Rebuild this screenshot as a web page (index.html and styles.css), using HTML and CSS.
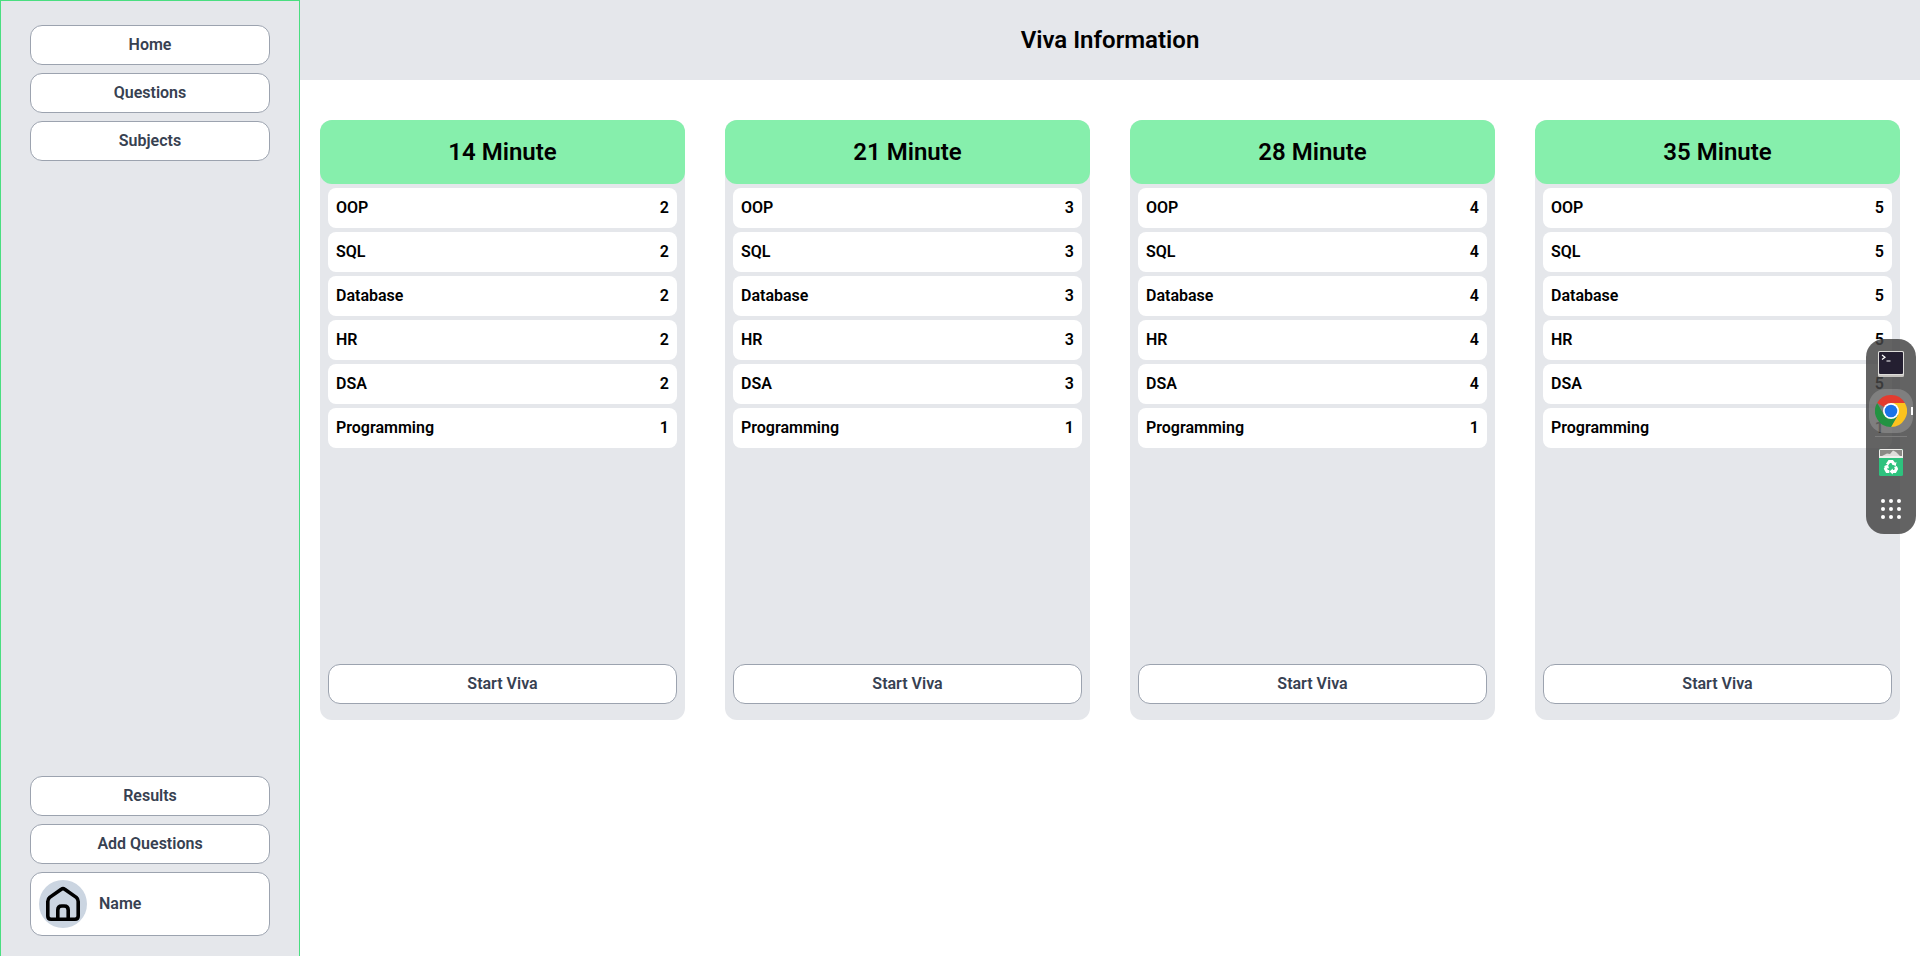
FILE: index.html
```html
<!DOCTYPE html>
<html lang="en">
<head>
<meta charset="utf-8">
<title>Viva Information</title>
<link rel="stylesheet" href="styles.css">
</head>
<body>
<div class="app">
  <nav class="sidebar">
    <div class="group">
      <button class="btn">Home</button>
      <button class="btn">Questions</button>
      <button class="btn">Subjects</button>
    </div>
    <div class="group">
      <button class="btn">Results</button>
      <button class="btn">Add Questions</button>
      <button class="btn profile">
        <span class="avatar">
          <svg viewBox="0 0 48 48" fill="none" stroke="#000" stroke-width="3.6" stroke-linejoin="round">
            <path d="M22.3 9.2 Q24 7.9 25.7 9.2 L37.3 17.4 Q39.2 19 39.2 21.5 V36 Q39.2 39.2 36 39.2 H12 Q8.8 39.2 8.8 36 V21.5 Q8.8 19 10.7 17.4 Z"/>
            <path d="M18.8 39.2 V30 Q18.8 26 22.8 26 H25.2 Q29.2 26 29.2 30 V39.2"/>
          </svg>
        </span>
        <span>Name</span>
      </button>
    </div>
  </nav>
  <main class="main">
    <header class="topbar"><h1 class="title">Viva Information</h1></header>
    <div class="cards">
      <section class="card">
        <h2 class="card-title">14 Minute</h2>
        <ul class="rows">
          <li class="row"><span>OOP</span><span>2</span></li>
          <li class="row"><span>SQL</span><span>2</span></li>
          <li class="row"><span>Database</span><span>2</span></li>
          <li class="row"><span>HR</span><span>2</span></li>
          <li class="row"><span>DSA</span><span>2</span></li>
          <li class="row"><span>Programming</span><span>1</span></li>
        </ul>
        <button class="btn start">Start Viva</button>
      </section>
      <section class="card">
        <h2 class="card-title">21 Minute</h2>
        <ul class="rows">
          <li class="row"><span>OOP</span><span>3</span></li>
          <li class="row"><span>SQL</span><span>3</span></li>
          <li class="row"><span>Database</span><span>3</span></li>
          <li class="row"><span>HR</span><span>3</span></li>
          <li class="row"><span>DSA</span><span>3</span></li>
          <li class="row"><span>Programming</span><span>1</span></li>
        </ul>
        <button class="btn start">Start Viva</button>
      </section>
      <section class="card">
        <h2 class="card-title">28 Minute</h2>
        <ul class="rows">
          <li class="row"><span>OOP</span><span>4</span></li>
          <li class="row"><span>SQL</span><span>4</span></li>
          <li class="row"><span>Database</span><span>4</span></li>
          <li class="row"><span>HR</span><span>4</span></li>
          <li class="row"><span>DSA</span><span>4</span></li>
          <li class="row"><span>Programming</span><span>1</span></li>
        </ul>
        <button class="btn start">Start Viva</button>
      </section>
      <section class="card">
        <h2 class="card-title">35 Minute</h2>
        <ul class="rows">
          <li class="row"><span>OOP</span><span>5</span></li>
          <li class="row"><span>SQL</span><span>5</span></li>
          <li class="row"><span>Database</span><span>5</span></li>
          <li class="row"><span>HR</span><span>5</span></li>
          <li class="row"><span>DSA</span><span>5</span></li>
          <li class="row"><span>Programming</span><span>1</span></li>
        </ul>
        <button class="btn start">Start Viva</button>
      </section>
    </div>
  </main>
</div>
<aside class="dock">
  <button class="dock-item" aria-label="Terminal">
    <svg viewBox="0 0 32 32">
      <rect x="3" y="4" width="26" height="25" rx="1.500" fill="#c6c4bf"/>
      <rect x="3" y="3" width="26" height="24" rx="1.500" fill="#deddda"/>
      <rect x="4" y="4" width="24" height="22" rx="1" fill="#241f31"/>
      <path d="M7 7 L10 9.200 L7 11.500 M11.500 13 H15.500" fill="none" stroke="#fff" stroke-width="1.200"/>
    </svg>
  </button>
  <button class="dock-item active" aria-label="Chrome">
    <svg viewBox="0 0 32 32">
      <path d="M16 16 L2.140 8 A16 16 0 0 1 29.860 8 Z" fill="#e33b2e"/>
      <path d="M16 8 H29.860 A16 16 0 0 1 16 32 L22.900 20 Z" fill="#fcc31e"/>
      <path d="M2.140 8 A16 16 0 0 0 16 32 L22.900 20 L16 16 L9.100 20 Z" fill="#229342"/>
      <circle cx="16" cy="16" r="8" fill="#fff"/>
      <circle cx="16" cy="16" r="6.300" fill="#1a73e8"/>
    </svg>
  </button>
  <div class="divider"></div>
  <button class="dock-item" aria-label="Trash">
    <svg viewBox="0 0 32 32">
      <rect x="4" y="3" width="24" height="27" rx="1.500" fill="#2ec27e"/>
      <path d="M4 4.500 Q4 3 5.500 3 H26.500 Q28 3 28 4.500 V12 H4 Z" fill="#f0efec"/>
      <rect x="5" y="4" width="22" height="6" fill="#8b8a86"/>
      <path d="M7 10 L12 7.500 L15 8 L18 4.500 L21 6 L25 10 Z" fill="#deddda"/>
      <g fill="none" stroke="#fff" stroke-width="3">
        <path d="M12.200 18.500 L14.300 15.500 H17.200 L19 18"/>
        <path d="M20.500 20.500 L21.500 22.800 L20 25.500 H17"/>
        <path d="M14.300 25.500 H12 L10.500 22.800 L11.800 20.500"/>
      </g>
      <path d="M21.500 16 L20.800 20 L17 18.500 Z M17.800 22.500 V28.500 L14.500 25.500 Z M8.800 20.300 L13 18.500 L14 22.500 Z" fill="#fff"/>
    </svg>
  </button>
  <button class="dock-item" aria-label="Show apps">
    <svg viewBox="0 0 32 32" fill="#fff">
      <circle cx="8" cy="8" r="2"/><circle cx="16" cy="8" r="2"/><circle cx="24" cy="8" r="2"/>
      <circle cx="8" cy="16" r="2"/><circle cx="16" cy="16" r="2"/><circle cx="24" cy="16" r="2"/>
      <circle cx="8" cy="24" r="2"/><circle cx="16" cy="24" r="2"/><circle cx="24" cy="24" r="2"/>
    </svg>
  </button>
</aside>
</body>
</html>
```
FILE: styles.css
```css
* { box-sizing: border-box; }
body {
  margin: 0;
  font: 600 16px/24px Roboto, "Liberation Sans", sans-serif;
  color: #000;
  background: #fff;
}
h1, h2, ul { margin: 0; padding: 0; }
button { font: inherit; cursor: pointer; }

.app { display: flex; min-height: 100vh; }
.sidebar {
  flex: 0 0 300px;
  display: flex;
  flex-direction: column;
  justify-content: space-between;
  padding: 24px 29px 20px;
  background: #e5e7eb;
  border: 1px solid #4ade80;
  border-bottom: 0;
}
.group { display: flex; flex-direction: column; gap: 8px; }
.btn {
  height: 40px;
  padding: 0 8px;
  color: #374151;
  background: #fff;
  border: 1px solid #9ca3af;
  border-radius: 12px;
}
.profile {
  display: flex;
  align-items: center;
  gap: 12px;
  height: 64px;
}
.avatar {
  width: 48px;
  height: 48px;
  border-radius: 50%;
  background: #cbd5e1;
}
.avatar svg { display: block; }

.main { flex: 1; min-width: 0; }
.topbar { padding: 24px; background: #e5e7eb; text-align: center; }
.title, .card-title { font-size: 24px; line-height: 32px; font-weight: 600; }
.cards {
  display: grid;
  grid-template-columns: repeat(4, 1fr);
  gap: 40px;
  padding: 40px 20px;
}
.card {
  display: flex;
  flex-direction: column;
  min-height: 600px;
  padding-bottom: 16px;
  background: #e5e7eb;
  border-radius: 12px;
}
.card-title {
  padding: 16px;
  text-align: center;
  background: #86efac;
  border-radius: 12px;
}
.rows {
  flex: 1;
  display: flex;
  flex-direction: column;
  gap: 4px;
  padding: 4px 8px;
  list-style: none;
}
.row {
  display: flex;
  justify-content: space-between;
  padding: 8px;
  background: #fff;
  border-radius: 8px;
}
.start { margin: 0 8px; }

.dock {
  position: fixed;
  top: 339px;
  right: 4px;
  width: 50px;
  padding: 3px;
  display: flex;
  flex-direction: column;
  gap: 3px;
  background: rgba(69, 69, 69, 0.84);
  border-radius: 18px;
}
.dock-item {
  position: relative;
  height: 44px;
  padding: 6px;
  background: none;
  border: 0;
  border-radius: 16px;
}
.dock-item svg { display: block; width: 32px; height: 32px; }
.active { background: rgba(255, 255, 255, 0.18); }
.active::after {
  content: "";
  position: absolute;
  right: 0;
  top: 18px;
  width: 2px;
  height: 8px;
  background: #fff;
}
.divider { height: 1px; margin: 0 6px; background: #7c7c7c; }
```
